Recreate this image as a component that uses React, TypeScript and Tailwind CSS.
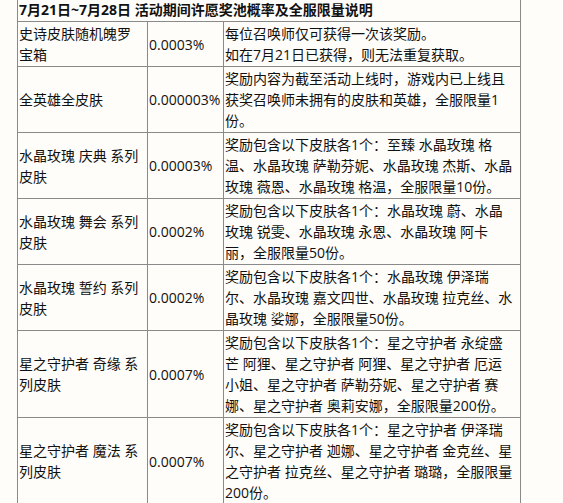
import React from 'react'

type Row = { name: string[]; rate: string; desc: string[] }

const rows: Row[] = [
  {
    name: ['史诗皮肤随机魄罗', '宝箱'],
    rate: '0.0003%',
    desc: ['每位召唤师仅可获得一次该奖励。', '如在7月21日已获得，则无法重复获取。']
  },
  {
    name: ['全英雄全皮肤'],
    rate: '0.000003%',
    desc: ['奖励内容为截至活动上线时，游戏内已上线且', '获奖召唤师未拥有的皮肤和英雄，全服限量1', '份。']
  },
  {
    name: ['水晶玫瑰 庆典 系列', '皮肤'],
    rate: '0.00003%',
    desc: [
      '奖励包含以下皮肤各1个：至臻 水晶玫瑰 格',
      '温、水晶玫瑰 萨勒芬妮、水晶玫瑰 杰斯、水晶',
      '玫瑰 薇恩、水晶玫瑰 格温，全服限量10份。'
    ]
  },
  {
    name: ['水晶玫瑰 舞会 系列', '皮肤'],
    rate: '0.0002%',
    desc: [
      '奖励包含以下皮肤各1个：水晶玫瑰 蔚、水晶',
      '玫瑰 锐雯、水晶玫瑰 永恩、水晶玫瑰 阿卡',
      '丽，全服限量50份。'
    ]
  },
  {
    name: ['水晶玫瑰 誓约 系列', '皮肤'],
    rate: '0.0002%',
    desc: [
      '奖励包含以下皮肤各1个：水晶玫瑰 伊泽瑞',
      '尔、水晶玫瑰 嘉文四世、水晶玫瑰 拉克丝、水',
      '晶玫瑰 娑娜，全服限量50份。'
    ]
  },
  {
    name: ['星之守护者 奇缘 系', '列皮肤'],
    rate: '0.0007%',
    desc: [
      '奖励包含以下皮肤各1个：星之守护者 永绽盛',
      '芒 阿狸、星之守护者 阿狸、星之守护者 厄运',
      '小姐、星之守护者 萨勒芬妮、星之守护者 赛',
      '娜、星之守护者 奥莉安娜，全服限量200份。'
    ]
  },
  {
    name: ['星之守护者 魔法 系', '列皮肤'],
    rate: '0.0007%',
    desc: [
      '奖励包含以下皮肤各1个：星之守护者 伊泽瑞',
      '尔、星之守护者 迦娜、星之守护者 金克丝、星',
      '之守护者 拉克丝、星之守护者 璐璐，全服限量',
      '200份。'
    ]
  }
]

const Lines = ({ lines }: { lines: string[] }) => (
  <>
    {lines.map((l, i) => (
      <div key={i} className="whitespace-pre">
        {l}
      </div>
    ))}
  </>
)

const cell = 'border border-[#8a8a8a] px-px py-px align-middle overflow-visible'

export default function App() {
  return (
    <div className="w-[563px] h-[503px] overflow-hidden bg-[#fffdf9] pl-[17px] font-['Open_Sans','Noto_Sans_CJK_SC',sans-serif] text-[14px] leading-[21px] text-[#111]">
      <table className="-mt-[3px] w-[504px] table-fixed border-collapse">
        <colgroup>
          <col className="w-[130px]" />
          <col className="w-[76px]" />
          <col />
        </colgroup>
        <tbody>
          <tr>
            <td colSpan={3} className={`${cell} font-bold`}>
              7月21日~7月28日 活动期间许愿奖池概率及全服限量说明
            </td>
          </tr>
          {rows.map((r, i) => (
            <tr key={i}>
              <td className={cell}>
                <Lines lines={r.name} />
              </td>
              <td className={`${cell} whitespace-nowrap`}>{r.rate}</td>
              <td className={cell}>
                <Lines lines={r.desc} />
              </td>
            </tr>
          ))}
        </tbody>
      </table>
    </div>
  )
}
